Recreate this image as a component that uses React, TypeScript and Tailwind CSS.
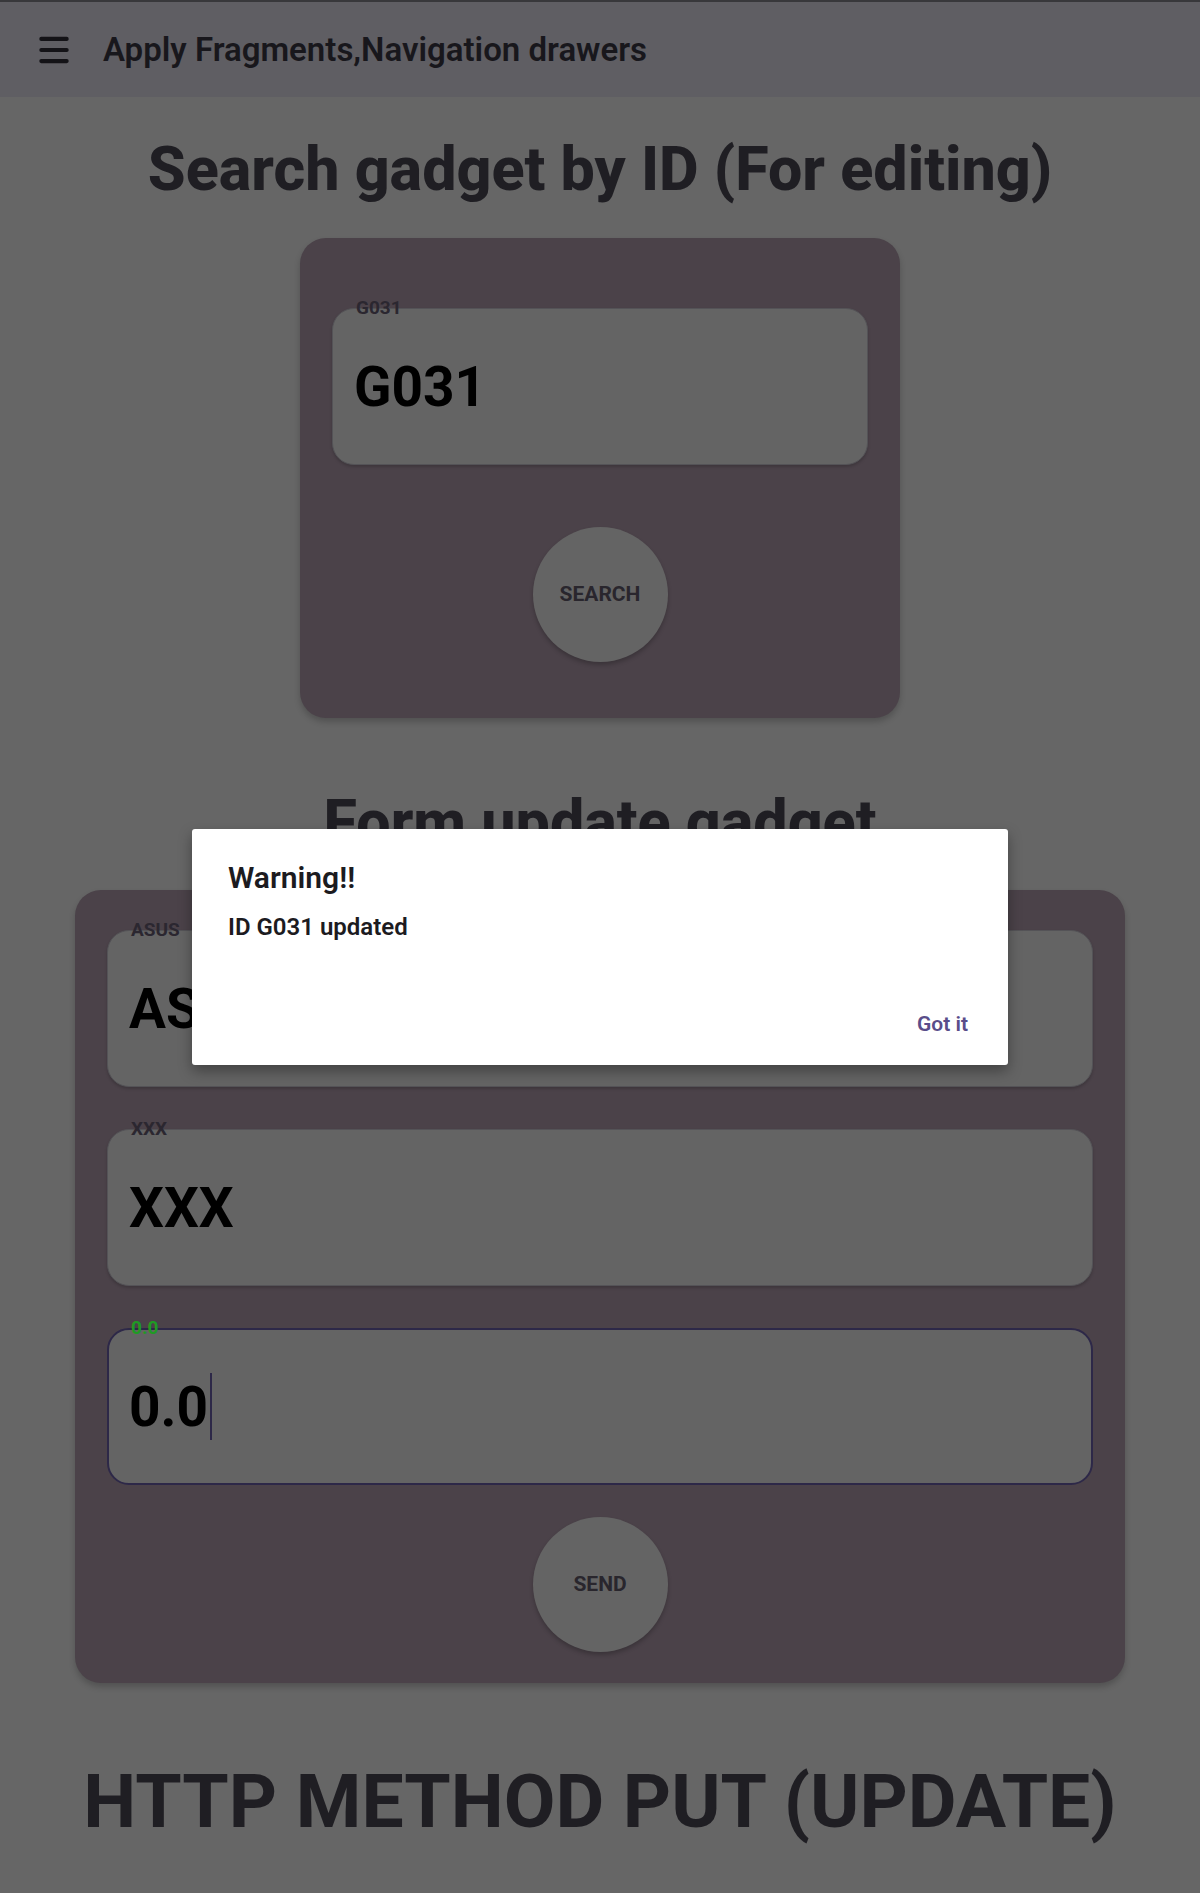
import { Menu } from "lucide-react";

const fields = [
  { label: "ASUS", value: "ASUS", focused: false },
  { label: "XXX", value: "XXX", focused: false },
  { label: "0.0", value: "0.0", focused: true },
];

function Field({
  label,
  value,
  focused,
}: {
  label: string;
  value: string;
  focused?: boolean;
}) {
  return (
    <div
      className={
        focused
          ? "relative h-[157px] rounded-[22px] border-2 border-[#2d2848] bg-[#646464] flex items-center pl-[20px]"
          : "relative h-[157px] rounded-[22px] border border-[#545357] bg-[#646464] flex items-center pl-[21px] shadow-[0_2px_3px_rgba(0,0,0,0.18)]"
      }
    >
      <span
        className={
          focused
            ? "absolute left-[20px] top-[-12px] px-[2px] text-[19px] leading-[20px] font-bold text-[#1f9a24]"
            : "absolute left-[21px] top-[-11px] px-[2px] text-[19px] leading-[20px] font-bold text-[#2b2730]"
        }
      >
        {label}
      </span>
      <span className="text-[55px] leading-[64px] font-bold text-black">{value}</span>
      {focused && <span className="ml-[2px] w-[2px] h-[67px] bg-[#2d2848]" />}
    </div>
  );
}

function RoundButton({ text }: { text: string }) {
  return (
    <button className="w-[135px] h-[135px] rounded-full bg-[#646464] text-[21px] font-bold text-[#29262d] shadow-[0_3px_4px_rgba(0,0,0,0.22)]">
      {text}
    </button>
  );
}

export default function App() {
  return (
    <div className="relative min-h-[1893px] overflow-hidden bg-[#666666] font-['Roboto','Liberation_Sans',sans-serif]">
      {/* Top bar */}
      <header className="h-[97px] border-t-2 border-[#38383b] bg-[#5f5e63] flex items-center">
        <Menu size={38} strokeWidth={2.6} className="ml-[35px] text-[#141317]" />
        <h1 className="ml-[30px] text-[33px] leading-[40px] font-semibold text-[#18171c]">
          Apply Fragments,Navigation drawers
        </h1>
      </header>

      <main className="flex flex-col items-center">
        <h2 className="mt-[37px] text-[61px] leading-[70px] font-extrabold text-[#1f1e23]">
          Search gadget by ID (For editing)
        </h2>

        {/* Search card */}
        <div className="mt-[34px] w-[600px] h-[480px] rounded-[26px] bg-[#4b4249] px-[32px] pt-[70px] flex flex-col shadow-[0_4px_6px_rgba(0,0,0,0.2)]">
          <Field label="G031" value="G031" />
          <div className="mt-[62px] flex justify-center">
            <RoundButton text="SEARCH" />
          </div>
        </div>

        <h2 className="mt-[69px] text-[61px] leading-[70px] font-extrabold text-[#1f1e23]">
          Form update gadget
        </h2>

        {/* Update form card */}
        <div className="mt-[33px] w-[1050px] rounded-[26px] bg-[#4b4249] px-[32px] pt-[40px] pb-[31px] flex flex-col shadow-[0_4px_6px_rgba(0,0,0,0.2)]">
          <div className="flex flex-col gap-[42px]">
            {fields.map((f) => (
              <Field key={f.label} label={f.label} value={f.value} focused={f.focused} />
            ))}
          </div>
          <div className="mt-[32px] flex justify-center">
            <RoundButton text="SEND" />
          </div>
        </div>

        <h2 className="mt-[74px] text-[75px] leading-[88px] font-bold text-[#1f1e23]">
          HTTP METHOD PUT (UPDATE)
        </h2>
      </main>

      {/* Dialog */}
      <div className="absolute left-[192px] top-[829px] w-[816px] h-[236px] rounded-[3px] bg-white pt-[31px] px-[36px] shadow-[0_6px_14px_rgba(0,0,0,0.35)] flex flex-col">
        <p className="text-[30px] leading-[35px] font-semibold text-[#1c1b1f]">Warning!!</p>
        <p className="mt-[18px] text-[24px] leading-[28px] font-semibold text-[#1c1b1f]">ID G031 updated</p>
        <div className="mt-[71px] flex justify-end pr-[4px]">
          <button className="text-[21px] leading-[25px] font-semibold text-[#5a4d8a]">Got it</button>
        </div>
      </div>
    </div>
  );
}
